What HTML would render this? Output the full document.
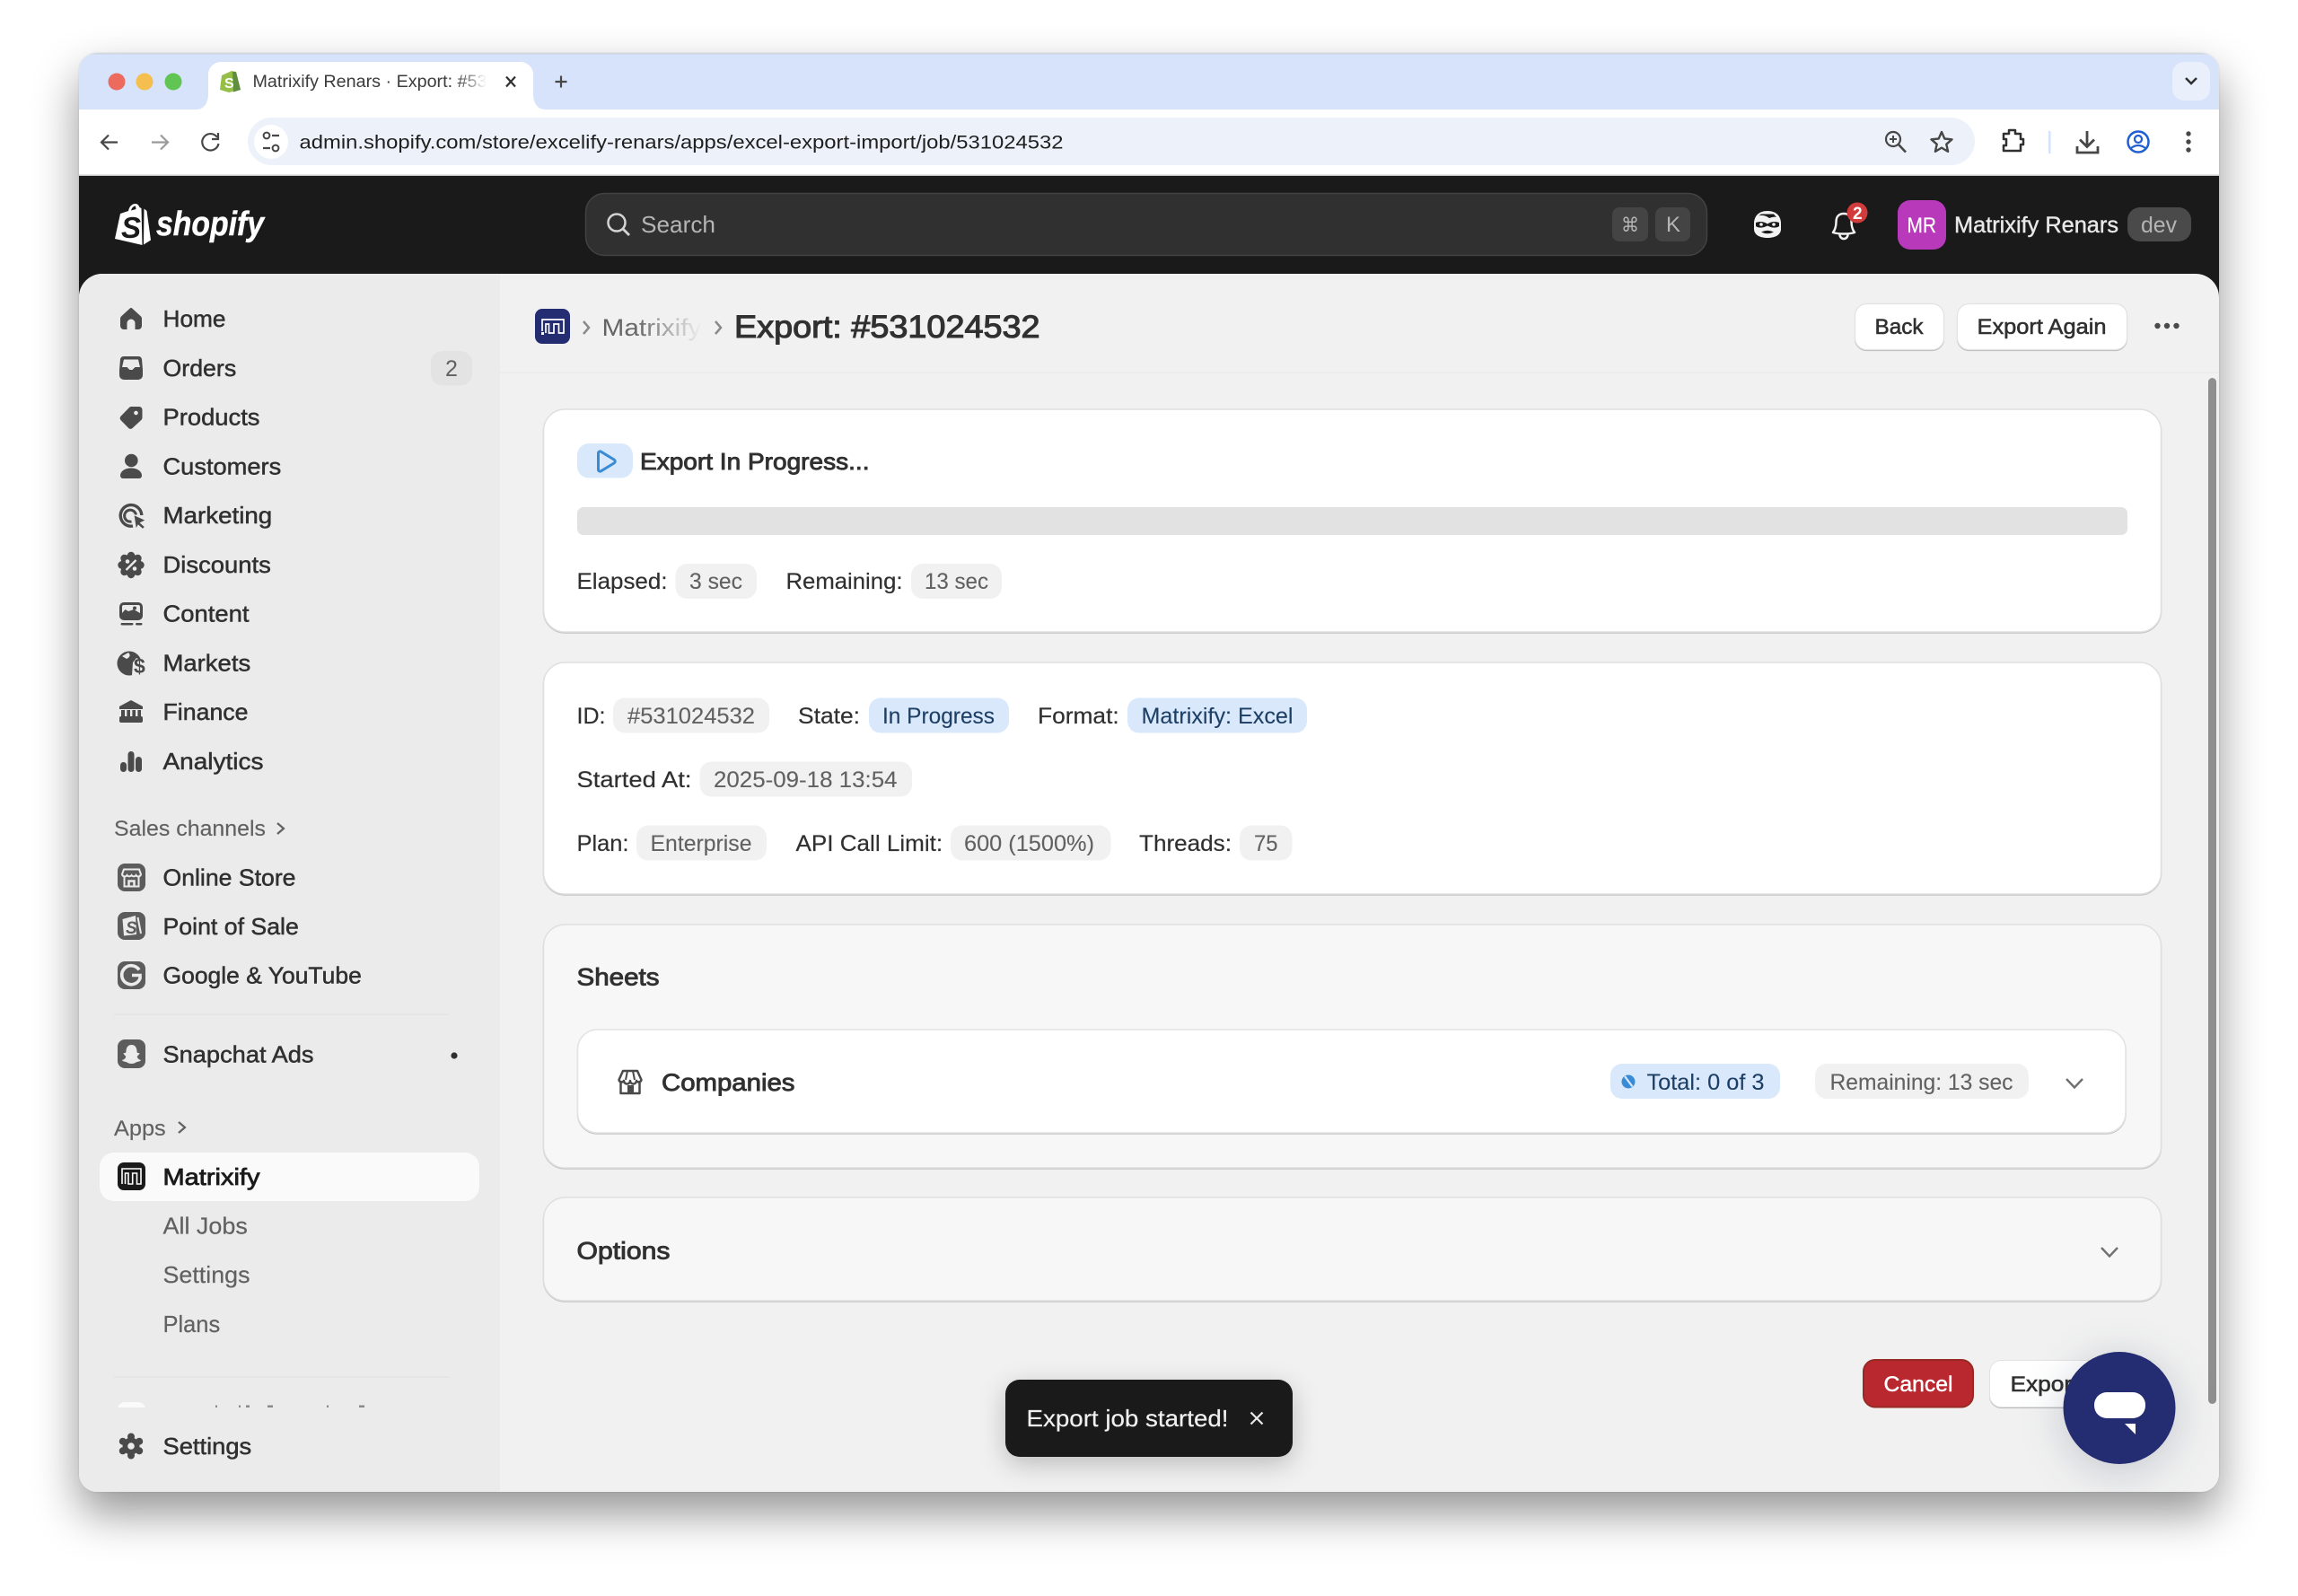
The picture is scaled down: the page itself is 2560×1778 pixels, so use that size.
<!DOCTYPE html>
<html><head><meta charset="utf-8"><title>Matrixify Renars · Export</title>
<style>
html,body{margin:0;padding:0;background:#fff;width:2560px;height:1778px;overflow:hidden}
#w{position:absolute;left:88px;top:59px;width:2384px;height:1603px;border-radius:20px;box-shadow:0 24px 50px rgba(0,0,0,.42),0 0 2px rgba(0,0,0,.12)}
svg{position:absolute;left:0;top:0}
text{font-family:"Liberation Sans",sans-serif;fill:#303030}
.n{font-size:26px;stroke:#303030;stroke-width:.5}
.s{font-size:24px;fill:#616161;stroke:#616161;stroke-width:.15}
.g{font-size:25px;fill:#616161;stroke:#616161;stroke-width:.12}
.l{font-size:25px;fill:#303030;stroke:#303030;stroke-width:.2}
.b{font-size:25px;fill:#1d3f66;stroke:#1d3f66;stroke-width:.12}
.h{font-size:27px;stroke:#303030;stroke-width:.9}
.btn{font-size:24px;stroke:#303030;stroke-width:.55}
.sub{font-size:26px;fill:#616161;stroke:#616161;stroke-width:.2}
</style></head><body>
<div id="w"></div>
<svg width="2560" height="1778" viewBox="0 0 2560 1778" xmlns="http://www.w3.org/2000/svg">
<defs>
<clipPath id="win"><rect x="88" y="59" width="2384" height="1603" rx="20"/></clipPath>
<clipPath id="panel"><rect x="88" y="305" width="2384" height="1400" rx="26"/></clipPath>
<clipPath id="cut"><rect x="100" y="1555" width="450" height="13"/></clipPath>
<linearGradient id="fb" gradientUnits="userSpaceOnUse" x1="671" x2="782" y1="0" y2="0"><stop offset="0" stop-color="#616161"/><stop offset=".35" stop-color="#6a6a6a"/><stop offset="1" stop-color="#f1f1f1"/></linearGradient>
<linearGradient id="ft" gradientUnits="userSpaceOnUse" x1="510" x2="542" y1="0" y2="0"><stop offset="0" stop-color="#3c3c3c"/><stop offset="1" stop-color="#fff"/></linearGradient>
</defs>
<g clip-path="url(#win)">
<!-- tab strip -->
<rect x="88" y="59" width="2384" height="70" fill="#d6e3fa"/>
<rect x="88" y="59" width="2384" height="1.5" fill="#d0d6df"/>
<rect x="88" y="122" width="2384" height="73" fill="#fff"/>
<rect x="88" y="194.500" width="2384" height="1.5" fill="#c8c8c8"/>
<circle cx="130" cy="91" r="9.5" fill="#ec6a5e"/><circle cx="161" cy="91" r="9.5" fill="#f4bf4f"/><circle cx="193" cy="91" r="9.5" fill="#61c554"/>
<path d="M218 122 C228 122 232 114 232 104 V83 A14 14 0 0 1 246 69 H580 A14 14 0 0 1 594 83 V104 C594 114 598 122 608 122 Z" fill="#fff"/>
<path d="M247 84 L258 79 L263 80 L268 100 L255 103 L245 100 Z" fill="#95bf47"/><path d="M263 80 L268 100 L260 102.500 L259 80 Z" fill="#5e8e3e"/>
<text x="250" y="98" font-size="16" font-weight="bold" style="fill:#fff">S</text>
<text x="281.500" y="97" font-size="19" textLength="261" lengthAdjust="spacingAndGlyphs" style="fill:url(#ft)">Matrixify Renars · Export: #53</text>
<path d="M564 85.500 L574 96.500 M574 85.500 L564 96.500" stroke="#303030" stroke-width="2.200" fill="none"/>
<path d="M625 84.500 V97.500 M618.500 91 H631.500" stroke="#474747" stroke-width="2.200" fill="none"/>
<rect x="2420" y="69" width="42" height="43" rx="13" fill="#e9effb"/>
<path d="M2435 87 L2441 93 L2447 87" stroke="#303030" stroke-width="2.500" fill="none"/>
<!-- toolbar -->
<path d="M131 158.500 H113 M121 150.500 L113 158.500 L121 166.500" stroke="#474747" stroke-width="2.200" fill="none"/>
<path d="M169 158.500 H187 M179 150.500 L187 158.500 L179 166.500" stroke="#9a9a9a" stroke-width="2.200" fill="none"/>
<path d="M242 153 A9.200 9.200 0 1 0 243.500 160 M243 148 V155 H236" stroke="#474747" stroke-width="2.200" fill="none"/>
<rect x="276" y="131" width="1924" height="53" rx="26.500" fill="#edf2fa"/>
<circle cx="302" cy="158" r="19" fill="#fff"/>
<circle cx="297" cy="151" r="3.400" fill="none" stroke="#474747" stroke-width="2"/><path d="M303 151 H311 M293 165 H301" stroke="#474747" stroke-width="2.200"/><circle cx="307" cy="165" r="3.400" fill="none" stroke="#474747" stroke-width="2"/>
<text x="333.500" y="165.500" font-size="21" textLength="851" lengthAdjust="spacingAndGlyphs" style="fill:#1f1f1f">admin.shopify.com/store/excelify-renars/apps/excel-export-import/job/531024532</text>
<circle cx="2109" cy="155" r="8" fill="none" stroke="#474747" stroke-width="2.200"/><path d="M2115 161 L2123 169.500" stroke="#474747" stroke-width="2.600"/><path d="M2105 155 H2113 M2109 151 V159" stroke="#474747" stroke-width="2"/>
<path d="M2163 147 L2166.300 154.500 L2174.500 155.300 L2168.300 160.700 L2170.100 168.800 L2163 164.600 L2155.900 168.800 L2157.700 160.700 L2151.500 155.300 L2159.700 154.500 Z" fill="none" stroke="#474747" stroke-width="2.400" stroke-linejoin="round"/>
<path d="M2232 149 H2238 V145 H2245 V149 H2251 V155 H2254 V161 H2251 V168 H2232 V162 H2235 V155 H2232 Z" fill="none" stroke="#303030" stroke-width="2.500" stroke-linejoin="round"/>
<rect x="2282" y="146" width="2.500" height="25" fill="#d3e3fd"/>
<path d="M2325 146 V163 M2317 155.500 L2325 163.500 L2333 155.500 M2314 163 V170 H2337 V163" stroke="#474747" stroke-width="2.800" fill="none"/>
<circle cx="2382" cy="158" r="11.500" fill="none" stroke="#1f5fd1" stroke-width="2.500"/><circle cx="2382" cy="155" r="4" fill="none" stroke="#1f5fd1" stroke-width="2.200"/><path d="M2374 165 Q2382 159 2390 165" fill="none" stroke="#1f5fd1" stroke-width="2.200"/>
<circle cx="2438" cy="149" r="2.700" fill="#474747"/><circle cx="2438" cy="158" r="2.700" fill="#474747"/><circle cx="2438" cy="167" r="2.700" fill="#474747"/>
<!-- header -->
<rect x="88" y="196" width="2384" height="150" fill="#1a1a1a"/>
<path d="M128 266 L134 238 L143 235 C144 230 147 227 151 227 C153 227 154.500 228.500 155.500 231 L157.500 232 L158.500 273 Z" fill="#fff"/>
<path d="M160.500 232.500 L163.500 235 L168 267.500 L160 272.500 Z" fill="#fff"/>
<path d="M146 234.500 C147 231 149 229.500 151 229.500 L151.500 233 Z" fill="#1a1a1a"/>
<text x="135" y="265" font-size="33" font-weight="bold" font-style="italic" style="fill:#1a1a1a">S</text>
<text x="174" y="262" font-size="38" font-weight="bold" font-style="italic" textLength="120" lengthAdjust="spacingAndGlyphs" style="fill:#fff;stroke:#fff;stroke-width:.5">shopify</text>
<rect x="652.500" y="215.500" width="1249" height="69" rx="21" fill="#303030" stroke="#424242" stroke-width="1.500"/>
<circle cx="687" cy="248" r="9.500" fill="none" stroke="#d4d4d4" stroke-width="2.500"/><path d="M694 255 L701 262" stroke="#d4d4d4" stroke-width="2.800"/>
<text x="714" y="259" font-size="26" textLength="83" lengthAdjust="spacingAndGlyphs" style="fill:#b5b5b5">Search</text>
<rect x="1796" y="231" width="40" height="38" rx="8" fill="#444"/><rect x="1844" y="231" width="39" height="38" rx="8" fill="#444"/>
<text x="1806" y="258" font-size="22" style="fill:#b5b5b5;font-family:'DejaVu Sans',sans-serif" textLength="20" lengthAdjust="spacingAndGlyphs">⌘</text>
<text x="1856" y="258" font-size="24" style="fill:#b5b5b5">K</text>
<!-- head icon -->
<path d="M1969 235 C1979 235 1984 241 1984 249 V255 C1984 262 1977 265 1969 265 C1961 265 1954 262 1954 255 V249 C1954 241 1959 235 1969 235 Z" fill="#f3f3f3"/>
<path d="M1956 248 Q1963 245.500 1969 249.500 Q1975 245.500 1982 248 V252 Q1977 255.500 1969 251.500 Q1961 255.500 1956 252 Z" fill="#1a1a1a"/>
<circle cx="1962" cy="250" r="1.800" fill="#f3f3f3"/><circle cx="1976" cy="250" r="1.800" fill="#f3f3f3"/>
<path d="M1962 258.500 Q1969 255 1976 258.500 Q1969 262 1962 258.500 Z" fill="#1a1a1a"/>
<path d="M1959 240.500 Q1965 238.500 1971 243 Q1976 241 1979 242 L1976 238.500 H1962 Z" fill="#1a1a1a"/>
<!-- bell -->
<path d="M2042 259 C2045 255 2045.500 251 2045.500 247 C2045.500 241 2049 238 2054 238 C2059 238 2062.500 241 2062.500 247 C2062.500 251 2063 255 2066 259 C2060 261 2048 261 2042 259 Z" fill="none" stroke="#f3f3f3" stroke-width="2.500" stroke-linejoin="round"/>
<path d="M2049.500 261.500 A4.500 4.500 0 0 0 2058.500 261.500" fill="none" stroke="#f3f3f3" stroke-width="2.500"/>
<circle cx="2069" cy="237" r="11.500" fill="#d23b3b"/>
<text x="2064" y="244" font-size="19" font-weight="bold" style="fill:#fff">2</text>
<rect x="2114" y="223" width="54" height="55" rx="14" fill="#b83abb"/>
<text x="2124.500" y="259" font-size="24" textLength="32.500" lengthAdjust="spacingAndGlyphs" style="fill:#fff;stroke:#fff;stroke-width:.2">MR</text>
<text x="2177" y="259" font-size="25" textLength="183" lengthAdjust="spacingAndGlyphs" style="fill:#e8e8e8;stroke:#e8e8e8;stroke-width:.4">Matrixify Renars</text>
<rect x="2370" y="231" width="71" height="38" rx="14" fill="#4a4a4a"/>
<text x="2385" y="259" font-size="25" textLength="40" lengthAdjust="spacingAndGlyphs" style="fill:#b5b5b5">dev</text>
<!-- panel -->
<g clip-path="url(#panel)">
<rect x="88" y="305" width="2384" height="1357" fill="#f1f1f1"/>
<rect x="88" y="305" width="469" height="1357" fill="#ebebeb"/>
</g>
<rect x="557" y="414.500" width="1915" height="1.500" fill="#ebebeb"/>
<!-- NAV ICONS -->
<g fill="#4a4a4a">
<path transform="translate(146,355)" d="M-1.500 -11.300 a2.200 2.200 0 0 1 3 0 L11 -2.500 a3 3 0 0 1 1 2.500 V8 a4 4 0 0 1 -4 4 H4.500 V5 a4.500 4.500 0 0 0 -9 0 V12 H-8 a4 4 0 0 1 -4 -4 V0 a3 3 0 0 1 1 -2.500 Z"/>
<g transform="translate(146,410)"><path d="M-8 -13 H8 a4 4 0 0 1 4 3 L13 2 V8 a5 5 0 0 1 -5 5 H-8 a5 5 0 0 1 -5 -5 V2 L-12 -10 a4 4 0 0 1 4 -3 Z"/><path d="M-8 -9.500 H8 L10 -1 H4.500 L1.500 2 H-1.500 L-4.500 -1 H-10 Z" fill="#ebebeb"/></g>
<g transform="translate(146,465.500)"><path d="M0 -12.500 H9 a3.500 3.500 0 0 1 3.500 3.500 V0 a3 3 0 0 1 -1 2.200 L1.500 11.500 a3 3 0 0 1 -4.200 0 L-11.500 2.500 a3 3 0 0 1 0 -4.200 L-2 -11.500 a3 3 0 0 1 2 -1 Z"/><circle cx="5.500" cy="-5.500" r="2.300" fill="#ebebeb"/></g>
<circle cx="146.300" cy="513" r="7.300"/><path d="M134 530 c0 -5 5 -8.500 12 -8.500 s12 3.500 12 8.500 a3 3 0 0 1 -3 3 h-18 a3 3 0 0 1 -3 -3z"/>
<g fill="none" stroke="#4a4a4a"><path d="M148 586 A11.800 11.800 0 1 1 157.800 574" stroke-width="3.400"/><path d="M146.500 581 A6.500 6.500 0 1 1 151.500 573.500" stroke-width="3"/></g>
<path d="M149 573.500 L162.500 579.500 L156.500 582.500 L161.500 587 L159 589.500 L154 585 L151.500 589.500 Z" stroke="#ebebeb" stroke-width="1" />
<g transform="translate(146,629.500)"><circle r="12"/><circle cx="0" cy="-10.500" r="4.200"/><circle cx="0" cy="10.500" r="4.200"/><circle cx="10.500" cy="0" r="4.200"/><circle cx="-10.500" cy="0" r="4.200"/><circle cx="7.500" cy="-7.500" r="4.200"/><circle cx="-7.500" cy="7.500" r="4.200"/><circle cx="7.500" cy="7.500" r="4.200"/><circle cx="-7.500" cy="-7.500" r="4.200"/><g fill="#ebebeb"><circle cx="-4" cy="-4" r="2.300"/><circle cx="4" cy="4" r="2.300"/></g><path d="M5.500 -5.500 L-5.500 5.500" stroke="#ebebeb" stroke-width="2.400"/></g>
<rect x="133" y="671" width="26" height="20" rx="5"/><path d="M136 683 V676 a2 2 0 0 1 2 -2 H154 a2 2 0 0 1 2 2 V683 L149 679 L143 681 L139.500 679 Z" fill="#ebebeb"/><circle cx="150" cy="677.500" r="2" /><rect x="134.500" y="694" width="14" height="2.500" rx="1.200"/><rect x="151" y="694" width="7.500" height="2.500" rx="1.200"/>
<circle cx="144" cy="739" r="13.500"/><path d="M143 727 Q147 731 141 734 L136 731 Z M148 738 L152 733 L159 737 L159 749 L150 754 L147 752 Z" fill="#ebebeb"/>
<text x="149" y="750" font-size="23" font-weight="bold" style="fill:#4a4a4a">$</text>
<path d="M146 780 L159 787 V790 H133 V787 Z"/><rect x="135" y="791" width="22" height="7"/><g fill="#ebebeb"><rect x="139" y="791" width="2.400" height="7"/><rect x="145" y="791" width="2.400" height="7"/><rect x="151" y="791" width="2.400" height="7"/></g><rect x="133" y="798" width="26" height="7" rx="2"/>
<rect x="134" y="849" width="7" height="11" rx="3.500"/><rect x="142.500" y="837" width="7" height="23" rx="3.500"/><rect x="151" y="843" width="7" height="17" rx="3.500"/>
<!-- App boxes -->
<rect x="131" y="962" width="31" height="31" rx="8" fill="#5c5c5c"/>
<rect x="131" y="1016" width="31" height="31" rx="8" fill="#5c5c5c"/>
<rect x="131" y="1071" width="31" height="31" rx="8" fill="#5c5c5c"/>
<rect x="131" y="1158" width="31" height="32" rx="8" fill="#5c5c5c"/>
</g>
<g fill="none" stroke="#ebebeb" stroke-width="2">
<path d="M138 968.500 H155 L157 974 A3 3 0 0 1 151.500 975 A3 3 0 0 1 146.500 975 A3 3 0 0 1 141.500 975 A3 3 0 0 1 136 974 Z"/><path d="M138.500 977 V987.500 H154.500 V977"/><path d="M143.500 987.500 V981.500 H149.500 V987.500" stroke-width="2.500"/>
<path d="M136.500 1024 L151 1020 L152 1041 L138 1042.500 Z" fill="#ebebeb" stroke="none"/><path d="M153.500 1022 L157 1040" stroke-width="2"/>
<path d="M155 1080.500 A10.500 10.500 0 1 0 156 1090 V1086.500 H147" stroke-width="3.600"/>
</g>
<text x="140" y="1040" font-size="19" font-weight="bold" font-style="italic" style="fill:#5c5c5c">S</text>
<path d="M146.500 1164 C151 1164 152.500 1168 152.500 1171 C152.500 1173 153.500 1173.500 155.500 1173 C155 1176 152 1176 153 1178 C154 1180 155.500 1180.500 157 1181 C156 1183 153 1182.500 151.500 1183.500 C150 1184.500 148.500 1185 146.500 1185 C144.500 1185 143 1184.500 141.500 1183.500 C140 1182.500 137 1183 136 1181 C137.500 1180.500 139 1180 140 1178 C141 1176 138 1176 137.500 1173 C139.500 1173.500 140.500 1173 140.500 1171 C140.500 1168 142 1164 146.500 1164 Z" fill="#ebebeb"/>
<!-- NAV TEXT -->
<text class="n" x="181.500" y="364" textLength="70" lengthAdjust="spacingAndGlyphs">Home</text>
<text class="n" x="181.500" y="418.800" textLength="81.700" lengthAdjust="spacingAndGlyphs">Orders</text>
<text class="n" x="181.500" y="473.500" textLength="108" lengthAdjust="spacingAndGlyphs">Products</text>
<text class="n" x="181.500" y="528.300" textLength="131.700" lengthAdjust="spacingAndGlyphs">Customers</text>
<text class="n" x="181.500" y="583" textLength="121.700" lengthAdjust="spacingAndGlyphs">Marketing</text>
<text class="n" x="181.500" y="637.800" textLength="120.300" lengthAdjust="spacingAndGlyphs">Discounts</text>
<text class="n" x="181.500" y="692.500" textLength="96" lengthAdjust="spacingAndGlyphs">Content</text>
<text class="n" x="181.500" y="747.300" textLength="97.700" lengthAdjust="spacingAndGlyphs">Markets</text>
<text class="n" x="181.500" y="802" textLength="95" lengthAdjust="spacingAndGlyphs">Finance</text>
<text class="n" x="181.500" y="856.800" textLength="112" lengthAdjust="spacingAndGlyphs">Analytics</text>
<rect x="480" y="391" width="46" height="38.500" rx="13" fill="#e3e3e3"/>
<text x="496" y="419" font-size="25" style="fill:#616161">2</text>
<text class="s" x="127" y="931" textLength="169" lengthAdjust="spacingAndGlyphs">Sales channels</text>
<path d="M309 917 L316 923 L309 929" fill="none" stroke="#616161" stroke-width="2.200"/>
<text class="n" x="181.500" y="986.500" textLength="148" lengthAdjust="spacingAndGlyphs">Online Store</text>
<text class="n" x="181.500" y="1041" textLength="151.300" lengthAdjust="spacingAndGlyphs">Point of Sale</text>
<text class="n" x="181.500" y="1095.500" textLength="221.300" lengthAdjust="spacingAndGlyphs">Google &amp; YouTube</text>
<rect x="127" y="1129.500" width="373" height="1.500" fill="#e3e3e3"/>
<text class="n" x="181.500" y="1183.500" textLength="168" lengthAdjust="spacingAndGlyphs">Snapchat Ads</text>
<circle cx="506" cy="1176" r="3.600" fill="#303030"/>
<text class="s" x="127" y="1265" textLength="57.700" lengthAdjust="spacingAndGlyphs">Apps</text>
<path d="M199 1250 L206 1256 L199 1262" fill="none" stroke="#616161" stroke-width="2.200"/>
<rect x="111" y="1284" width="423" height="54" rx="16" fill="#fafafa"/>
<rect x="131" y="1295" width="31" height="31" rx="7" fill="#1a1a1a"/>
<path d="M136 1319 V1302 H157 V1319 H152.500 V1307 H147.700 V1319 H143 V1307 H139.500 V1319" fill="none" stroke="#fff" stroke-width="1.600"/>
<text class="n" x="181.500" y="1320" textLength="108" lengthAdjust="spacingAndGlyphs" style="fill:#1a1a1a;stroke:#1a1a1a;stroke-width:.8">Matrixify</text>
<text class="sub" x="181.500" y="1374.500" textLength="94.300" lengthAdjust="spacingAndGlyphs">All Jobs</text>
<text class="sub" x="181.500" y="1429" textLength="97" lengthAdjust="spacingAndGlyphs">Settings</text>
<text class="sub" x="181.500" y="1484" textLength="63.700" lengthAdjust="spacingAndGlyphs">Plans</text>
<rect x="127" y="1533.500" width="373" height="1.500" fill="#e3e3e3"/>
<g clip-path="url(#cut)"><rect x="131" y="1562" width="31" height="20" rx="8" fill="#fafafa"/><g fill="#8a8a8a"><rect x="240" y="1565.500" width="2" height="3"/><rect x="266" y="1565.500" width="2" height="3"/><rect x="274" y="1565.500" width="4" height="3"/><rect x="298" y="1565.500" width="6" height="3"/><rect x="364" y="1565.500" width="2" height="3"/><rect x="400" y="1565.500" width="6" height="3"/></g></g>
<g transform="translate(146,1611)"><circle r="9.500" fill="#4a4a4a"/><g fill="#4a4a4a"><circle cx="0" cy="-10.500" r="4"/><circle cx="0" cy="10.500" r="4"/><circle cx="9.200" cy="-5.300" r="4"/><circle cx="-9.200" cy="5.300" r="4"/><circle cx="9.200" cy="5.300" r="4"/><circle cx="-9.200" cy="-5.300" r="4"/></g><circle r="3.800" fill="#ebebeb"/></g>
<text class="n" x="181.500" y="1620" textLength="98.700" lengthAdjust="spacingAndGlyphs">Settings</text>
<!-- TOP BAR -->
<rect x="596" y="344" width="39" height="39" rx="8" fill="#242d72"/>
<path d="M604 369 V356 H628 V371 H622.500 V361 H617 V371 H611.500 V361 H608 V371" fill="none" stroke="#fff" stroke-width="1.700"/><rect x="603" y="370" width="3" height="3" fill="#fff"/>
<path d="M650 358 L656 365 L650 372" fill="none" stroke="#8a8a8a" stroke-width="2.500"/>
<text x="670.500" y="374" font-size="27" textLength="111" lengthAdjust="spacingAndGlyphs" style="fill:url(#fb)">Matrixify</text>
<path d="M797 358 L803 365 L797 372" fill="none" stroke="#8a8a8a" stroke-width="2.500"/>
<text x="818" y="376" font-size="35" textLength="340.600" lengthAdjust="spacingAndGlyphs" style="stroke:#303030;stroke-width:1.100">Export: #531024532</text>
<g style="filter:drop-shadow(0 1.500px 0 #bdbdbd)" fill="#fff" stroke="#e3e3e3" stroke-width="1.200">
<rect x="2066.500" y="338.500" width="99" height="51" rx="13"/>
<rect x="2180.500" y="338.500" width="189" height="51" rx="13"/>
</g>
<text class="btn" x="2088.500" y="372" textLength="54" lengthAdjust="spacingAndGlyphs">Back</text>
<text class="btn" x="2202.500" y="372" textLength="144" lengthAdjust="spacingAndGlyphs">Export Again</text>
<circle cx="2403.500" cy="363" r="3.200" fill="#4a4a4a"/><circle cx="2414" cy="363" r="3.200" fill="#4a4a4a"/><circle cx="2424.500" cy="363" r="3.200" fill="#4a4a4a"/>
<!-- CARDS -->
<g style="filter:drop-shadow(0 1.500px 0 #c4c4c4)" stroke="#dfdfdf" stroke-width="1.500">
<rect x="605.500" y="456" width="1802" height="248" rx="24" fill="#fff"/>
<rect x="605.500" y="738" width="1802" height="258" rx="24" fill="#fff"/>
<rect x="605.500" y="1030" width="1802" height="271" rx="24" fill="#f7f7f7"/>
<rect x="605.500" y="1334" width="1802" height="115" rx="24" fill="#f7f7f7"/>
</g>
<!-- card 1 -->
<rect x="643" y="494" width="62" height="38.500" rx="13" fill="#d9e9fb"/>
<path d="M666.500 505 a2 2 0 0 1 3 -1.800 L684 512 a2.300 2.300 0 0 1 0 4 L669.500 524.800 a2 2 0 0 1 -3 -1.800 Z" fill="none" stroke="#3a8bd6" stroke-width="3"/>
<text class="n" x="713" y="523" textLength="255.500" lengthAdjust="spacingAndGlyphs" style="stroke-width:.9">Export In Progress...</text>
<rect x="643" y="565" width="1727" height="31" rx="7" fill="#e2e2e2"/>
<text class="l" x="642.500" y="656" textLength="101" lengthAdjust="spacingAndGlyphs">Elapsed:</text>
<rect x="752.500" y="628" width="90.500" height="39" rx="13" fill="#f1f1f1"/>
<text class="g" x="768" y="656" textLength="59" lengthAdjust="spacingAndGlyphs">3 sec</text>
<text class="l" x="875.500" y="656" textLength="130" lengthAdjust="spacingAndGlyphs">Remaining:</text>
<rect x="1015" y="628" width="101" height="39" rx="13" fill="#f1f1f1"/>
<text class="g" x="1030" y="656" textLength="71" lengthAdjust="spacingAndGlyphs">13 sec</text>
<!-- card 2 -->
<text class="l" x="642.500" y="806" textLength="32" lengthAdjust="spacingAndGlyphs">ID:</text>
<rect x="683" y="777.500" width="174" height="39" rx="13" fill="#f1f1f1"/>
<text class="g" x="699" y="806" textLength="142" lengthAdjust="spacingAndGlyphs">#531024532</text>
<text class="l" x="889" y="806" textLength="69" lengthAdjust="spacingAndGlyphs">State:</text>
<rect x="968" y="777.500" width="156" height="39" rx="13" fill="#d9e9fb"/>
<text class="b" x="983" y="806" textLength="125" lengthAdjust="spacingAndGlyphs">In Progress</text>
<text class="l" x="1156" y="806" textLength="90.700" lengthAdjust="spacingAndGlyphs">Format:</text>
<rect x="1256" y="777.500" width="200" height="39" rx="13" fill="#d9e9fb"/>
<text class="b" x="1271.500" y="806" textLength="169" lengthAdjust="spacingAndGlyphs">Matrixify: Excel</text>
<text class="l" x="642.500" y="877" textLength="128" lengthAdjust="spacingAndGlyphs">Started At:</text>
<rect x="779.500" y="848.500" width="236.500" height="39" rx="13" fill="#f1f1f1"/>
<text class="g" x="795" y="877" textLength="204.500" lengthAdjust="spacingAndGlyphs">2025-09-18 13:54</text>
<text class="l" x="642.500" y="948" textLength="58" lengthAdjust="spacingAndGlyphs">Plan:</text>
<rect x="709" y="919.500" width="145" height="39" rx="13" fill="#f1f1f1"/>
<text class="g" x="724.500" y="948" textLength="113" lengthAdjust="spacingAndGlyphs">Enterprise</text>
<text class="l" x="886.500" y="948" textLength="163.600" lengthAdjust="spacingAndGlyphs">API Call Limit:</text>
<rect x="1059" y="919.500" width="178.500" height="39" rx="13" fill="#f1f1f1"/>
<text class="g" x="1074" y="948" textLength="145" lengthAdjust="spacingAndGlyphs">600 (1500%)</text>
<text class="l" x="1269" y="948" textLength="103" lengthAdjust="spacingAndGlyphs">Threads:</text>
<rect x="1381" y="919.500" width="58.500" height="39" rx="13" fill="#f1f1f1"/>
<text class="g" x="1397" y="948" textLength="26.500" lengthAdjust="spacingAndGlyphs">75</text>
<!-- sheets -->
<text class="h" x="642.500" y="1097.500" textLength="92" lengthAdjust="spacingAndGlyphs">Sheets</text>
<g style="filter:drop-shadow(0 1.500px 0 #c4c4c4)"><rect x="643.500" y="1147" width="1724.500" height="115" rx="22" fill="#fff" stroke="#e3e3e3" stroke-width="1.500"/></g>
<path d="M694 1193 H710 L714.500 1203 A3 3 0 0 1 709 1204 A3.500 3.500 0 0 1 702 1204 A3.500 3.500 0 0 1 695 1204 A3 3 0 0 1 689.500 1203 Z M691.500 1206 V1218 H712.500 V1206" fill="none" stroke="#4a4a4a" stroke-width="2.500" stroke-linejoin="round"/><rect x="699" y="1209" width="7" height="9" fill="#4a4a4a"/><path d="M699 1193 L697 1203 M705 1193 L707 1203" stroke="#4a4a4a" stroke-width="2"/>
<text class="h" x="737" y="1215" textLength="148.500" lengthAdjust="spacingAndGlyphs">Companies</text>
<rect x="1794" y="1185" width="189" height="39" rx="13" fill="#d9e9fb"/>
<circle cx="1814" cy="1205" r="7.500" fill="#3a8bd6"/><path d="M1810 1199 L1818.500 1210.500" stroke="#d9e9fb" stroke-width="2.200"/>
<text class="b" x="1834.500" y="1214" textLength="131" lengthAdjust="spacingAndGlyphs">Total: 0 of 3</text>
<rect x="2022" y="1185" width="238" height="39" rx="13" fill="#f1f1f1"/>
<text class="g" x="2038.500" y="1214" textLength="204" lengthAdjust="spacingAndGlyphs">Remaining: 13 sec</text>
<path d="M2302 1202 L2311 1211.500 L2320 1202" fill="none" stroke="#707070" stroke-width="2.400"/>
<!-- options -->
<text class="h" x="642.500" y="1402.500" textLength="104" lengthAdjust="spacingAndGlyphs">Options</text>
<path d="M2341 1390 L2350 1399.500 L2359 1390" fill="none" stroke="#707070" stroke-width="2.400"/>
<!-- footer buttons -->
<rect x="2076" y="1515" width="122" height="52.500" rx="13" fill="#b8282e" stroke="#972a25" stroke-width="2"/>
<text x="2098.500" y="1550" font-size="24" textLength="77" lengthAdjust="spacingAndGlyphs" style="fill:#fff;stroke:#fff;stroke-width:.45">Cancel</text>
<g style="filter:drop-shadow(0 1.500px 0 #bdbdbd)"><rect x="2216.500" y="1515.500" width="190" height="52" rx="13" fill="#fff" stroke="#e3e3e3" stroke-width="1"/></g>
<text class="btn" x="2239.500" y="1550" textLength="76" lengthAdjust="spacingAndGlyphs">Export</text>
<!-- toast -->
<g style="filter:drop-shadow(0 8px 14px rgba(0,0,0,.22))"><rect x="1120" y="1537" width="320" height="86" rx="16" fill="#1a1a1a"/></g>
<text x="1143.500" y="1589" font-size="26" textLength="225" lengthAdjust="spacingAndGlyphs" style="fill:#f0f0f0;stroke:#f0f0f0;stroke-width:.2">Export job started!</text>
<path d="M1393.500 1573.500 L1406.500 1586.500 M1406.500 1573.500 L1393.500 1586.500" stroke="#e8e8e8" stroke-width="2.200" fill="none"/>
<!-- scrollbar -->
<rect x="2460" y="421" width="9" height="1143" rx="4.500" fill="#8f8f8f"/>
<!-- chat bubble -->
<g style="filter:drop-shadow(0 8px 24px rgba(30,50,80,.22))"><circle cx="2361" cy="1568.500" r="62.500" fill="#242d72"/></g>
<rect x="2333" y="1551" width="57" height="29" rx="14" fill="#fff"/>
<path d="M2367 1586 H2379 V1598 Z" fill="#fff"/>
</g>
</svg>
</body></html>
